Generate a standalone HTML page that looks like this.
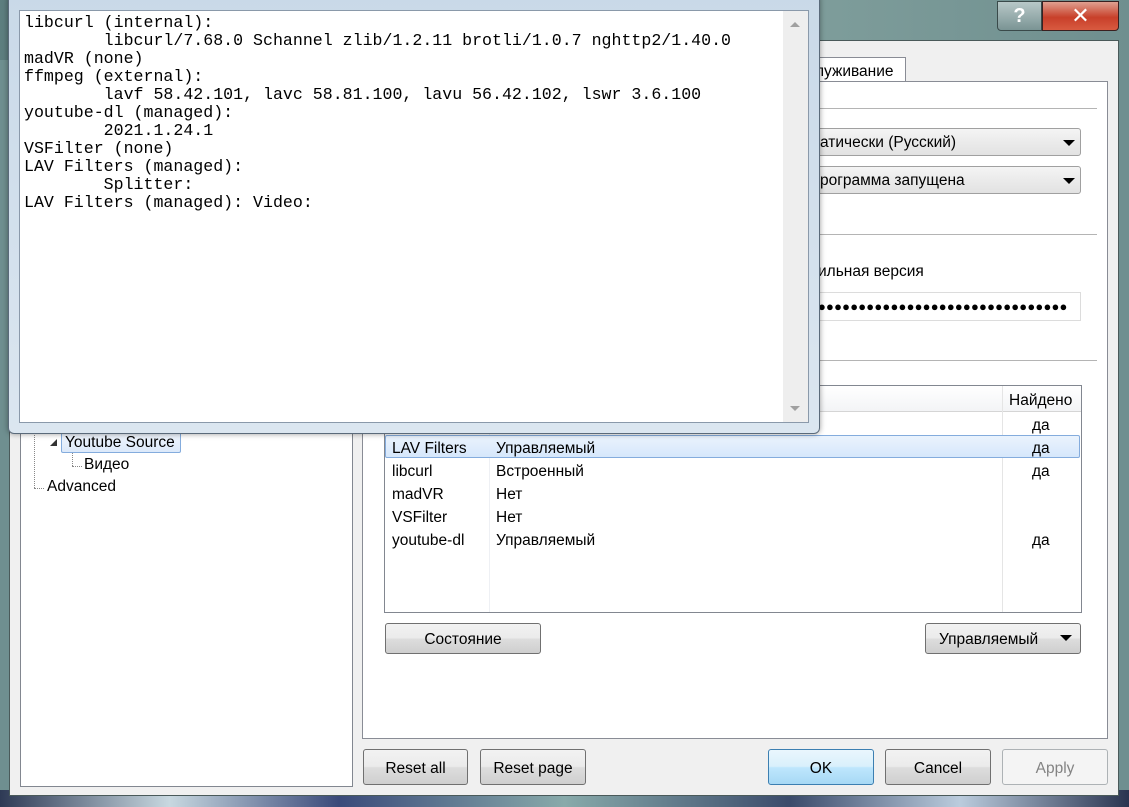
<!DOCTYPE html>
<html><head><meta charset="utf-8"><style>
*{margin:0;padding:0;box-sizing:border-box}
body{width:1129px;height:807px;overflow:hidden;position:relative;background:#6f8f90;font-family:"Liberation Sans","DejaVu Sans",sans-serif;font-size:15px;color:#000}
.a{position:absolute}
.btn{position:absolute;border:1px solid #707070;border-radius:3px;background:linear-gradient(#f2f2f2 0%,#ebebeb 48%,#dddddd 52%,#cfcfcf 100%);text-align:center;line-height:31px;font-size:15.5px}
.combo{position:absolute;border:1px solid #a0a0a0;border-radius:3px;background:linear-gradient(#f4f4f4,#e2e2e2);height:28px;line-height:27px;padding-left:4px;font-size:15.5px}
.tri{position:absolute;width:0;height:0;border-left:6px solid transparent;border-right:6px solid transparent;border-top:6px solid #000}
.mono{font-family:"Liberation Mono",monospace;font-size:16.6px;line-height:18px;white-space:pre}
</style></head><body>
<div class="a" style="left:0;top:0;width:1129px;height:60px;background:linear-gradient(90deg,#5d7e7f,#8aa8a4 50%,#6f8f8f)"></div>
<div class="a" style="left:0;top:790px;width:1129px;height:17px;background:linear-gradient(90deg,#2e3a55,#c8d8e0 15%,#3a4a7a 30%,#8aa 50%,#3b4b6b 70%,#bcd 85%,#2a3450)"></div>
<div class="a" style="left:997px;top:1px;width:45px;height:30px;border:1px solid #3a4a4a;border-radius:0 0 0 4px;background:linear-gradient(#b8c8c8,#7a9494);color:#fff;font-weight:bold;font-size:20px;text-align:center;line-height:28px">?</div>
<div class="a" style="left:1042px;top:1px;width:77px;height:30px;border:1px solid #3a2020;border-radius:0 0 4px 0;background:linear-gradient(#e0a090,#c8402a 55%,#d85a40);color:#fff;font-weight:bold;font-size:22px;text-align:center;line-height:28px">✕</div>
<div class="a" style="left:9px;top:40px;width:1110px;height:756px;background:#f0f0f0;border:1px solid #4a5a5a"></div>
<div class="a" style="left:800px;top:57px;width:106px;height:25px;background:#fff;border:1px solid #898c95;border-bottom:none;padding:5px 0 0 14px;font-size:15.5px">луживание</div>
<div class="a" style="left:362px;top:81px;width:746px;height:658px;background:#fff;border:1px solid #898c95"></div>
<div class="a" style="left:810px;top:108px;width:287px;height:1px;background:#b4b4b4"></div>
<div class="a" style="left:810px;top:234px;width:287px;height:1px;background:#b4b4b4"></div>
<div class="a" style="left:810px;top:360px;width:287px;height:1px;background:#b4b4b4"></div>
<div class="combo" style="left:805px;top:128px;width:276px;padding-left:14px">атически (Русский)</div><div class="tri" style="left:1063px;top:140px"></div>
<div class="combo" style="left:805px;top:166px;width:276px;padding-left:14px">рограмма запущена</div><div class="tri" style="left:1063px;top:178px"></div>
<div class="a" style="left:818px;top:263px;font-size:15.5px">ильная версия</div>
<div class="a" style="left:805px;top:292px;width:276px;height:29px;border:1px solid #dcdcdc;font-size:13px;letter-spacing:0.2px;line-height:27px;padding-left:12px;overflow:hidden;white-space:nowrap">●●●●●●●●●●●●●●●●●●●●●●●●●●●●●●●</div>
<div class="a" style="left:384px;top:385px;width:698px;height:228px;border:1px solid #828790;background:#fff"></div>
<div class="a" style="left:385px;top:386px;width:696px;height:26px;background:linear-gradient(#fff,#f3f4f6);border-bottom:1px solid #d5d5d5"></div>
<div class="a" style="left:1002px;top:386px;width:1px;height:226px;background:#e5e5e5"></div>
<div class="a" style="left:489px;top:412px;width:1px;height:200px;background:#eef0f4"></div>
<div class="a" style="left:1009px;top:392px;font-size:15.5px">Найдено</div>
<div class="a" style="left:385px;top:435px;width:695px;height:23px;border:1px solid #84acdd;border-radius:2px;background:linear-gradient(#eaf3fd,#d6e7fb)"></div>
<div class="a" style="left:392px;top:414px;line-height:23px;font-size:15.5px">
<div style="color:transparent">x</div><div>LAV Filters</div><div>libcurl</div><div>madVR</div><div>VSFilter</div><div>youtube-dl</div></div>
<div class="a" style="left:496px;top:414px;line-height:23px;font-size:15.5px">
<div style="color:transparent">x</div><div>Управляемый</div><div>Встроенный</div><div>Нет</div><div>Нет</div><div>Управляемый</div></div>
<div class="a" style="left:1032px;top:414px;line-height:23px;font-size:15.5px">
<div>да</div><div>да</div><div>да</div><div>&nbsp;</div><div>&nbsp;</div><div>да</div></div>
<div class="btn" style="left:385px;top:623px;width:156px;height:31px;line-height:31px">Состояние</div>
<div class="btn" style="left:925px;top:623px;width:156px;height:31px;line-height:31px;text-align:left;padding-left:13px">Управляемый</div><div class="tri" style="left:1060px;top:635px"></div>
<div class="a" style="left:20px;top:60px;width:333px;height:727px;background:#fff;border:1px solid #828790"></div>
<div class="a" style="left:34px;top:420px;width:0;height:68px;border-left:1px dotted #888"></div>
<div class="a" style="left:34px;top:488px;width:10px;border-top:1px dotted #888"></div>
<div class="a" style="left:72px;top:453px;width:0;height:13px;border-left:1px dotted #888"></div>
<div class="a" style="left:72px;top:466px;width:10px;border-top:1px dotted #888"></div>
<div class="a" style="left:50px;top:439px;width:0;height:0;border-left:7px solid transparent;border-bottom:7px solid #333"></div>
<div class="a" style="left:61px;top:432px;width:120px;height:21px;border:1px solid #84acdd;border-radius:2px;background:linear-gradient(#f0f6fd,#dce9fa);padding-left:3px;font-size:15.5px;line-height:20px">Youtube Source</div>
<div class="a" style="left:84px;top:456px;font-size:15.5px">Видео</div>
<div class="a" style="left:47px;top:478px;font-size:15.5px">Advanced</div>
<div class="btn" style="left:363px;top:749px;width:105px;height:36px;line-height:37px">Reset all</div>
<div class="btn" style="left:480px;top:749px;width:106px;height:36px;line-height:37px">Reset page</div>
<div class="btn" style="left:768px;top:749px;width:106px;height:36px;line-height:37px;border-color:#3c7fb1;background:linear-gradient(#eaf6fd,#d9f0fc 48%,#bee6fd 52%,#a7d9f5)">OK</div>
<div class="btn" style="left:885px;top:749px;width:106px;height:36px;line-height:37px">Cancel</div>
<div class="btn" style="left:1002px;top:749px;width:106px;height:36px;line-height:37px;border-color:#adb2b5;background:#f4f4f4;color:#838383">Apply</div>
<div class="a" style="left:8px;top:-6px;width:812px;height:440px;border:1px solid #5a6a7a;border-radius:6px;background:linear-gradient(#c9d9e8,#dbe6f0);box-shadow:0 0 6px rgba(0,0,0,.4)"></div>
<div class="a" style="left:19px;top:10px;width:790px;height:413px;background:#fff;border:1px solid #8a99aa"></div>
<div class="a" style="left:783px;top:11px;width:25px;height:411px;background:#eeeeee"></div>
<div class="a" style="left:790px;top:22px;width:0;height:0;border-left:5px solid transparent;border-right:5px solid transparent;border-bottom:5px solid #a0a0a0"></div>
<div class="a" style="left:790px;top:406px;width:0;height:0;border-left:5px solid transparent;border-right:5px solid transparent;border-top:5px solid #a0a0a0"></div>
<div class="a mono" style="left:24px;top:14px">libcurl (internal):
        libcurl/7.68.0 Schannel zlib/1.2.11 brotli/1.0.7 nghttp2/1.40.0
madVR (none)
ffmpeg (external):
        lavf 58.42.101, lavc 58.81.100, lavu 56.42.102, lswr 3.6.100
youtube-dl (managed):
        2021.1.24.1
VSFilter (none)
LAV Filters (managed):
        Splitter:
LAV Filters (managed): Video:</div>
</body></html>
